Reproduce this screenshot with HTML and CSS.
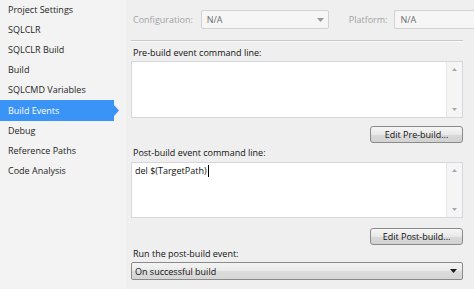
FILE: index.html
```html
<!DOCTYPE html>
<html>
<head>
<meta charset="utf-8">
<link rel="stylesheet" href="styles.css">
</head>
<body>
<div class="app">
  <nav class="side">
    <div class="item">Project Settings</div>
    <div class="item">SQLCLR</div>
    <div class="item">SQLCLR Build</div>
    <div class="item">Build</div>
    <div class="item">SQLCMD Variables</div>
    <div class="item sel">Build Events</div>
    <div class="item">Debug</div>
    <div class="item">Reference Paths</div>
    <div class="item">Code Analysis</div>
  </nav>
  <main class="main">
    <div class="toprow">
      <span class="dlabel">Configuration:</span>
      <div class="combo cfg"><span>N/A</span><svg class="darr" width="7" height="4" viewBox="0 0 7 4"><path d="M0 0H7L3.5 4Z" fill="#9a9a9a"/></svg></div>
      <span class="dlabel plat">Platform:</span>
      <div class="combo platc"><span>N/A</span></div>
    </div>
    <div class="sep"></div>
    <div class="label first">Pre-build event command line:</div>
    <div class="ta pre">
      <div class="tatext"></div>
      <div class="sb">
        <svg width="5" height="3" viewBox="0 0 5 3"><path d="M0 3H5L2.5 0Z" fill="#a8a8a8"/></svg>
        <svg width="5" height="3" viewBox="0 0 5 3"><path d="M0 0H5L2.5 3Z" fill="#a8a8a8"/></svg>
      </div>
    </div>
    <div class="btnrow"><div class="btn">Edit Pre-build...</div></div>
    <div class="label post">Post-build event command line:</div>
    <div class="ta postta">
      <div class="tatext">del $(TargetPath)<span class="caret"></span></div>
      <div class="sb">
        <svg width="5" height="3" viewBox="0 0 5 3"><path d="M0 3H5L2.5 0Z" fill="#a8a8a8"/></svg>
        <svg width="5" height="3" viewBox="0 0 5 3"><path d="M0 0H5L2.5 3Z" fill="#a8a8a8"/></svg>
      </div>
    </div>
    <div class="btnrow btn2"><div class="btn">Edit Post-build...</div></div>
    <div class="label run">Run the post-build event:</div>
    <div class="select"><span>On successful build</span><svg width="7" height="4" viewBox="0 0 7 4"><path d="M0 0H7L3.5 4Z" fill="#1a1a1a"/></svg></div>
  </main>
</div>
</body>
</html>
```

FILE: styles.css
```css
* { box-sizing: border-box; }
html, body { margin: 0; padding: 0; }
body {
  width: 474px;
  height: 289px;
  overflow: hidden;
  font-family: "Open Sans", "Noto Sans", sans-serif;
  font-size: 9px;
  color: #1e1e1e;
  background: #efefef;
}
.app {
  display: flex;
  height: 289px;
}
.side {
  width: 126px;
  flex: none;
  background: #f3f3f3;
  display: flex;
  flex-direction: column;
}
.item {
  height: 20px;
  line-height: 20px;
  padding-left: 8px;
  white-space: nowrap;
}
.item.sel {
  width: 119px;
  height: 21px;
  line-height: 21px;
  background: #3a93f6;
  color: #ffffff;
  clip-path: polygon(0 0, 114px 0, 114px 5px, 119px 50%, 114px 16px, 114px 100%, 0 100%);
}
.main {
  flex: 1;
  display: flex;
  flex-direction: column;
  padding: 10px 11px 0 5px;
  background: #efefef;
}
.toprow {
  display: flex;
  align-items: center;
  height: 19px;
  margin-right: -11px;
}
.dlabel {
  color: #a3a3a3;
  padding-left: 2px;
  white-space: nowrap;
}
.combo {
  height: 19px;
  border: 1px solid #d2d2d2;
  border-radius: 2px;
  background: #f6f6f6;
  color: #6a6a6a;
  display: flex;
  align-items: center;
  padding-left: 5px;
}
.cfg {
  width: 128px;
  margin-left: 8px;
  justify-content: space-between;
  padding-right: 4px;
}
.plat { margin-left: 18px; }
.platc {
  flex: 1;
  margin-left: 7px;
  border-right: none;
  border-radius: 2px 0 0 2px;
}
.sep {
  margin-top: 11px;
  height: 2px;
  border-top: 1px solid #c9c9c9;
  border-bottom: 1px solid #fafafa;
}
.label {
  height: 12px;
  line-height: 12px;
  padding-left: 2px;
  color: #111;
}
.label.first { margin-top: 5px; }
.ta {
  margin-top: 2px;
  background: #ffffff;
  border: 1px solid #d5d7dc;
  display: flex;
}
.ta.pre { height: 57px; }
.ta.postta { height: 56px; margin-top: 3px; }
.tatext {
  flex: 1;
  padding: 2px 3px;
  line-height: 12px;
  color: #111;
  display: flex;
  align-items: flex-start;
}
.caret {
  display: inline-block;
  width: 1px;
  height: 12px;
  background: #000;
  margin-left: 1px;
}
.sb {
  width: 16px;
  flex: none;
  background: #f5f5f5;
  border-left: 1px solid #e6e6e6;
  display: flex;
  flex-direction: column;
  justify-content: space-between;
  align-items: center;
  padding: 6px 0 6px;
}
.btnrow {
  display: flex;
  justify-content: flex-end;
  margin-top: 8px;
}
.btnrow.btn2 { margin-top: 10px; }
.btn {
  width: 93px;
  height: 17px;
  border: 1px solid #8a8a8a;
  border-radius: 3px;
  background: linear-gradient(#f6f6f6, #e8e8e8 50%, #d9d9d9 51%, #d2d2d2);
  display: flex;
  align-items: center;
  justify-content: center;
  color: #111;
}
.label.post { margin-top: 4px; }
.label.run { margin-top: 3px; }
.select {
  margin-top: 2px;
  height: 18px;
  border: 1px solid #8a8a8a;
  border-radius: 2px;
  background: linear-gradient(#f4f4f4, #e9e9e9 50%, #dcdcdc 51%, #d6d6d6);
  display: flex;
  align-items: center;
  justify-content: space-between;
  padding: 0 5px 0 3px;
  color: #111;
}
```
